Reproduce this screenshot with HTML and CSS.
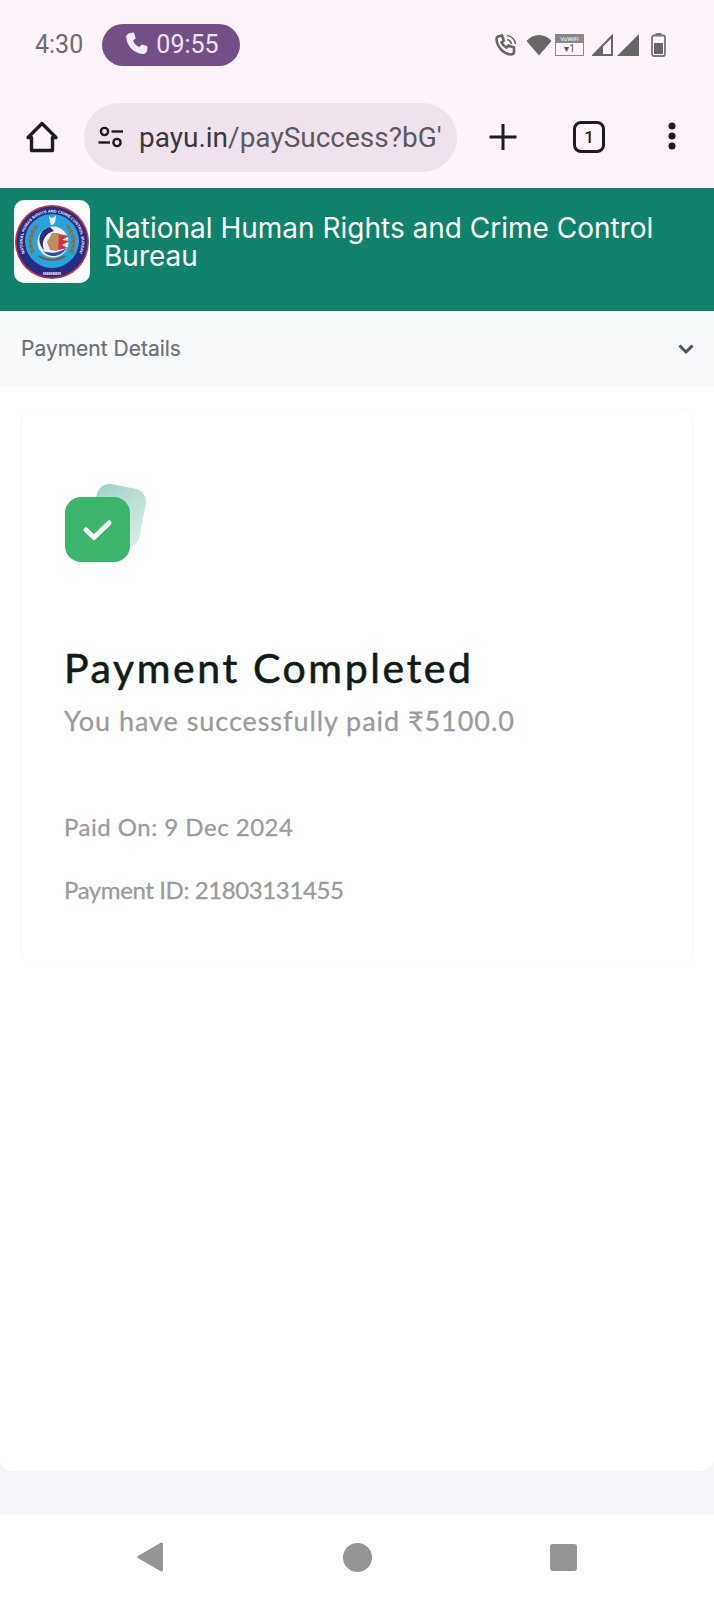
FILE: index.html
```html
<!doctype html>
<html lang="en-us">
<head>
    <meta charset="utf-8">
    <title>Payment Completed</title>
    <link rel="stylesheet" href="styles.css">
</head>
<body>
    <div id="phone">
        <div class="status-bar">
            <span class="clock">4:30</span>
            <span class="call-pill">
                <svg class="call-icon" viewBox="0 0 24 24"><path d="M6.6 2.6 9.7 2.2 11.3 7.4 8.9 9.6C10 12.2 11.9 14.100 14.500 15.200L16.700 12.900 21.800 14.400 21.500 17.800C21.300 20 19.800 21.500 17.700 21.300 9.500 20.600 3.500 14.500 2.800 6.400 2.700 4.400 4.300 2.900 6.600 2.600Z"/></svg>
                09:55
            </span>
            <div class="status-icons">
                <svg class="ic-call" width="22" height="22" viewBox="0 0 22 22"><path d="M3 2.500 7 1.500 8.800 6.500 6.500 8.500C7.500 10.800 9.200 12.500 11.500 13.500L13.500 11.500 19 13.500 19 17.500C19 19.500 18 20.500 16 20.500 8.500 20 2 13 1.500 5 1.500 3.500 2 3 3 2.500Z" fill="none" stroke="#666" stroke-width="2.600"/><path d="M12 1.500C16.500 2 20 5.500 20.500 10M12 5.500C14 6 16 7.500 16.500 10" fill="none" stroke="#666" stroke-width="1.500"/></svg>
                <svg class="ic-wifi" width="26" height="22" viewBox="0 0 26 22"><path d="M0.500 7C7 -1 19 -1 25.500 7L13 21.500Z" fill="#666"/></svg>
                <span class="sim-box">
                    <span class="sim-label">VoWiFi</span>
                    <span class="sim-num">&#9662;1</span>
                </span>
                <svg class="ic-sig1" width="21" height="22" viewBox="0 0 21 22"><path d="M1.500 21 20 2V21Z" fill="none" stroke="#666" stroke-width="2"/><path d="M0 22 11 11V22Z" fill="#666"/></svg>
                <svg class="ic-sig2" width="22" height="22" viewBox="0 0 22 22"><path d="M0 22 22 0V22Z" fill="#666"/></svg>
                <svg class="ic-battery" width="15" height="24" viewBox="0 0 15 24"><rect x="4.500" y="0" width="6" height="3" fill="#777"/><rect x="1" y="2.500" width="13" height="20.500" rx="2" fill="none" stroke="#777" stroke-width="1.800"/><rect x="3" y="10" width="9" height="11" fill="#666"/></svg>
            </div>
        </div>

        <div class="toolbar">
            <svg class="home-icon" width="36" height="36" viewBox="0 0 36 36"><path d="M18 4.500 32 18.500H28.500V31.500H7.500V18.500H4Z" fill="none" stroke="#1d1a20" stroke-width="3.400" stroke-linejoin="round"/></svg>
            <div class="url-box">
                <svg class="tune-icon" width="28" height="28" viewBox="0 0 28 28" fill="none" stroke="#1d1a20" stroke-width="2.400"><circle cx="7.500" cy="8.500" r="3.600"/><path d="M14.500 8.500H26"/><path d="M1.500 19.500H13"/><circle cx="20" cy="19.500" r="3.600"/></svg>
                <div class="url-text"><span class="url-host">payu.in</span>/paySuccess?bG&#39;</div>
            </div>
            <svg class="plus-icon" width="32" height="32" viewBox="0 0 32 32"><path d="M16 3V29M2.500 16H29.500" stroke="#1d1a20" stroke-width="3"/></svg>
            <span class="tab-count">1</span>
            <svg class="more-icon" width="12" height="32" viewBox="0 0 12 32"><circle cx="6" cy="5" r="3.500"/><circle cx="6" cy="15" r="3.500"/><circle cx="6" cy="25" r="3.500"/></svg>
        </div>

        <div class="site-header">
            <div class="logo-box">
                <svg width="76" height="76" viewBox="0 0 76 76">
                    <defs>
                        <path id="ring-top" d="M12.040 52A29.500 29.500 0 1 1 63.960 52"/>
                    </defs>
                    <circle cx="38" cy="38" r="37" fill="#c9344a"/>
                    <circle cx="38" cy="38" r="35.500" fill="#2a2c82"/>
                    <text class="logo-ring"><textPath href="#ring-top" startOffset="50%" text-anchor="middle">NATIONAL HUMAN RIGHTS AND CRIME CONTROL BUREAU</textPath></text>
                    <text class="logo-ring" x="38" y="71" text-anchor="middle">MEMBER</text>
                    <circle cx="38" cy="37" r="27" fill="#27a3dd"/>
                    <circle cx="39" cy="38" r="15.500" fill="#f2f2f4"/>
                    <path d="M36 23C25 25 22 38 30 46 27 38 30 30 40 27Z" fill="#2a2c82"/>
                    <path d="M29 47C36 55 47 53 53 44 45 49 37 50 29 47Z" fill="#2a4fa8"/>
                    <path d="M33 38 38 29 45 29 47 38 43 47 36 46Z" fill="#bb8d5f"/>
                    <path d="M45 30 55 32 48 36 56 37 48 41 54 44 44 46Z" fill="#d3313c"/>
                    <path d="M19 49C14 38 17 27 24 21M57 49C62 38 59 27 52 21" fill="none" stroke="#8b7040" stroke-width="3.500" stroke-dasharray="4 1"/>
                    <path d="M25 52C32 57 44 57 51 52" fill="none" stroke="#7a5a30" stroke-width="2"/>
                    <path d="M35 12C37 15 40 14 42 11 42 16 41 21 37 21 36 18 35 15 35 12Z" fill="#eef4fb"/>
                </svg>
            </div>
            <div class="site-name">National Human Rights and Crime Control Bureau</div>
        </div>

        <div class="details-bar">
            <span class="details-label">Payment Details</span>
            <svg class="chevron" width="18" height="12" viewBox="0 0 18 12"><path d="M2.500 2.500 9 9 15.500 2.500" fill="none" stroke="#4e5560" stroke-width="3"/></svg>
        </div>

        <div class="content">
            <div class="card">
                <div class="check-stack">
                    <div class="check-back"></div>
                    <div class="check-front">
                        <svg width="32" height="26" viewBox="0 0 32 26"><path d="M4 13 12 20.500 27 6" fill="none" stroke="#fff" stroke-width="5" stroke-linecap="round" stroke-linejoin="round"/></svg>
                    </div>
                </div>
                <h1 class="pay-title">Payment Completed</h1>
                <div class="pay-sub">You have successfully paid &#8377;5100.0</div>
                <div class="pay-meta pay-date">Paid On: 9 Dec 2024</div>
                <div class="pay-meta pay-id">Payment ID: 21803131455</div>
            </div>
        </div>

        <div class="bottom-strip"></div>

        <div class="nav-bar">
            <svg width="30" height="32" viewBox="0 0 30 32"><path d="M25.500 3V29L3 16Z" fill="#959595" stroke="#959595" stroke-width="3" stroke-linejoin="round"/></svg>
            <span class="nav-circle"></span>
            <span class="nav-square"></span>
        </div>
    </div>
</body>
</html>
```

FILE: styles.css
```css
/* General styles */
html, body {
    margin: 0;
    padding: 0;
}

body {
    background-color: #ffffff;
    font-family: Roboto, sans-serif;
}

#phone {
    width: 714px;
    height: 1599px;
    display: flex;
    flex-direction: column;
    overflow: hidden;
}

/* Android status bar */
.status-bar {
    height: 92px;
    flex: none;
    background-color: #fdf3fb;
    display: flex;
    align-items: center;
    padding: 0 48px 3px 35px;
    box-sizing: border-box;
}

.clock {
    font-size: 25px;
    color: #6d6b70;
    width: 67px;
}

.call-pill {
    width: 138px;
    height: 42px;
    border-radius: 21px;
    background-color: #734f87;
    color: #f0e4f3;
    font-size: 25px;
    display: flex;
    align-items: center;
    justify-content: center;
    gap: 6px;
}

.call-icon {
    width: 27px;
    height: 27px;
    fill: #f5eaf7;
    margin-top: -3px;
}

.status-icons {
    margin-left: auto;
    display: flex;
    align-items: center;
}

.ic-wifi {
    margin-left: 9px;
}

.sim-box {
    width: 29px;
    height: 22px;
    margin-left: 3px;
    border: 1px solid #888;
    display: flex;
    flex-direction: column;
    align-items: center;
    box-sizing: border-box;
    color: #555;
}

.sim-label {
    width: 100%;
    background-color: #888;
    color: #fff;
    font-size: 6px;
    line-height: 8px;
    text-align: center;
}

.sim-num {
    font-size: 10px;
    line-height: 12px;
}

.ic-sig1 {
    margin-left: 8px;
}

.ic-sig2 {
    margin-left: 4px;
}

.ic-battery {
    margin-left: 12px;
}

/* Browser toolbar */
.toolbar {
    height: 96px;
    flex: none;
    background-color: #fdf3fb;
    display: flex;
    align-items: center;
    padding-left: 24px;
    padding-bottom: 6px;
    box-sizing: border-box;
}

.home-icon {
    flex: none;
}

.url-box {
    width: 373px;
    height: 69px;
    margin-left: 24px;
    border-radius: 35px;
    background-color: #eee3ec;
    display: flex;
    align-items: center;
    padding: 0 10px 0 13px;
    box-sizing: border-box;
    flex: none;
}

.tune-icon {
    flex: none;
}

.url-text {
    margin-left: 14px;
    font-size: 28px;
    color: #5c5860;
    white-space: nowrap;
}

.url-host {
    color: #3a363e;
}

.plus-icon {
    margin-left: 30px;
    flex: none;
}

.tab-count {
    width: 32px;
    height: 32px;
    margin-left: 54px;
    border: 3px solid #1d1a20;
    border-radius: 8px;
    box-sizing: border-box;
    font-size: 17px;
    font-weight: 500;
    line-height: 26px;
    text-align: center;
    color: #1d1a20;
    flex: none;
}

.more-icon {
    margin-left: 61px;
    fill: #1d1a20;
    flex: none;
}

/* Merchant header */
.site-header {
    height: 123px;
    flex: none;
    background-color: #10816b;
    display: flex;
    align-items: flex-start;
    padding: 12px 14px 0 14px;
    box-sizing: border-box;
}

.logo-box {
    width: 76px;
    height: 83px;
    background-color: #ffffff;
    border-radius: 10px;
    display: flex;
    align-items: center;
    justify-content: center;
    flex: none;
}

.logo-ring {
    font-family: "Liberation Sans", sans-serif;
    font-size: 4px;
    font-weight: 700;
    fill: #f2f2f8;
}

.site-name {
    margin: 14px 0 0 14px;
    font-family: Inter, sans-serif;
    font-size: 28px;
    line-height: 28px;
    color: #ffffff;
}

.details-bar {
    height: 75px;
    flex: none;
    background-color: #f8f9fb;
    display: flex;
    align-items: center;
    justify-content: space-between;
    padding: 0 19px 0 21px;
    box-sizing: border-box;
}

.details-label {
    font-family: Inter, sans-serif;
    font-size: 21px;
    -webkit-text-stroke: 0.2px #6b7078;
    color: #6b7078;
}

/* Payment card */
.content {
    flex: 1;
    background-color: #ffffff;
    border-radius: 0 0 12px 12px;
    padding: 23px 20px 0 21px;
}

.card {
    height: 556px;
    box-sizing: border-box;
    border: 1px solid #f8f8f9;
    border-radius: 12px;
    padding: 75px 0 0 42px;
    font-family: Lato, sans-serif;
}

.check-stack {
    position: relative;
    width: 82px;
    height: 78px;
    margin-left: 1px;
}

.check-back {
    position: absolute;
    left: 28px;
    top: 1px;
    width: 50px;
    height: 60px;
    border-radius: 13px;
    background: linear-gradient(135deg, #9fd1c6, #dcefea);
    transform: rotate(11deg);
}

.check-front {
    position: absolute;
    left: 0;
    top: 12px;
    width: 65px;
    height: 65px;
    border-radius: 16px;
    background-color: #3cb46c;
    display: flex;
    align-items: center;
    justify-content: center;
}

.pay-title {
    margin: 80px 0 0 0;
    font-size: 41px;
    line-height: 50px;
    font-weight: 400;
    letter-spacing: 2.6px;
    -webkit-text-stroke: 0.6px #101b18;
    color: #101b18;
}

.pay-sub {
    margin-top: 11px;
    font-size: 27px;
    line-height: 34px;
    letter-spacing: 0.95px;
    -webkit-text-stroke: 0.3px #9a9b9c;
    color: #9a9b9c;
}

.pay-meta {
    font-size: 24px;
    line-height: 29px;
    -webkit-text-stroke: 0.3px #9a9b9c;
    color: #9a9b9c;
}

.pay-date {
    margin-top: 74px;
    letter-spacing: 0.5px;
}

.pay-id {
    margin-top: 34px;
    letter-spacing: -0.4px;
}

.bottom-strip {
    height: 56px;
    flex: none;
    background-color: #f4f4f9;
    margin-top: -12px;
    position: relative;
    z-index: -1;
}

.nav-bar {
    height: 84px;
    flex: none;
    background-color: #ffffff;
    display: grid;
    grid-template-columns: 1fr 1fr 1fr;
    align-items: center;
    justify-items: center;
    padding: 0 48px;
}

.nav-circle {
    width: 29px;
    height: 29px;
    border-radius: 50%;
    background-color: #959595;
}

.nav-square {
    width: 27px;
    height: 27px;
    border-radius: 3px;
    background-color: #959595;
}
```
